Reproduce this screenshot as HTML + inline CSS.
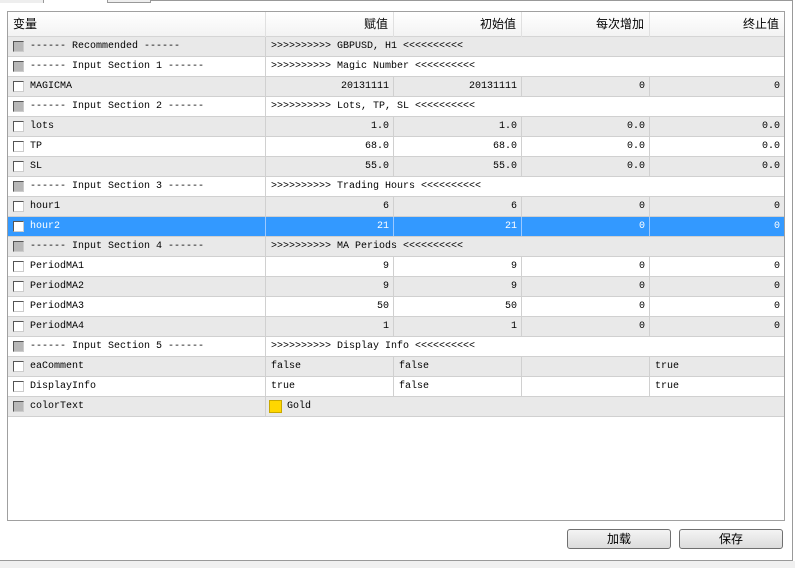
<!DOCTYPE html><html><head><meta charset="utf-8"><style>
*{margin:0;padding:0;box-sizing:border-box}
body{width:795px;height:568px;background:#fff;position:relative;overflow:hidden;font-family:"Liberation Mono","Noto Sans CJK SC",monospace;font-size:10px;color:#000}
.a{position:absolute}
.tbl{left:7px;top:11px;width:778px;height:510px;border:1px solid #a0a0a0;background:#fff}
.hd{position:absolute;left:0;top:0;width:776px;height:25px;background:linear-gradient(#fff,#f3f3f3);border-bottom:1px solid #d5d5d5;font-family:"Liberation Sans","Noto Sans CJK SC",sans-serif;font-size:12px}
.hd div{position:absolute;top:0;height:25px;line-height:25px;border-right:1px solid #e0e0e0;padding:0 5px}
.r{position:absolute;left:0;width:776px;height:20px;border-bottom:1px solid #d0d0d0}
.g{background:#e9e9e9}.w{background:#fff}.s{background:#3399ff;color:#fff}
.c{position:absolute;top:0;height:19px;line-height:19px;border-right:1px solid #d0d0d0;white-space:pre;overflow:hidden}
.s .c{border-right-color:#9cc9ff}
.rt{text-align:right;padding-right:4px}.lt{padding-left:5px}
.cb{position:absolute;left:5px;top:4px;width:11px;height:11px;border:1px solid #555;background:#fff;border-right-color:#ccc;border-bottom-color:#ccc}
.cb.x{background:#b8b8b8}
.btn{position:absolute;top:529px;width:104px;height:20px;border:1px solid #707070;border-radius:3px;background:linear-gradient(#f4f4f4,#dcdcdc);font-family:"Liberation Sans","Noto Sans CJK SC",sans-serif;font-size:12px;text-align:center;line-height:18px}
</style></head><body>
<div class="a" style="left:0;top:0;width:44px;height:3px;border-right:1px solid #999;background:#eee"></div>
<div class="a" style="left:107px;top:0;width:44px;height:3px;border:1px solid #999;border-top:0;background:#eee"></div>
<div class="a" style="left:151px;top:0;width:641px;height:1px;background:#999"></div>
<div class="a" style="left:792px;top:0;width:1px;height:561px;background:#999"></div>
<div class="a" style="left:0;top:560px;width:793px;height:1px;background:#999"></div>
<div class="a" style="left:0;top:561px;width:795px;height:7px;background:#f0f0f0"></div>
<div class="a tbl">
<div class="hd"><div style="left:0;width:258px">变量</div><div style="left:258px;width:128px;text-align:right">赋值</div><div style="left:386px;width:128px;text-align:right">初始值</div><div style="left:514px;width:128px;text-align:right">每次增加</div><div style="left:642px;width:134px;text-align:right;border:0">终止值</div></div>
<div id="rows"></div>
</div>
<div class="btn" style="left:567px">加载</div>
<div class="btn" style="left:679px">保存</div>
<script>
var R=[
['s','------ Recommended ------','>>>>>>>>>> GBPUSD, H1 <<<<<<<<<<'],
['s','------ Input Section 1 ------','>>>>>>>>>> Magic Number <<<<<<<<<<'],
['v','MAGICMA','20131111','20131111','0','0'],
['s','------ Input Section 2 ------','>>>>>>>>>> Lots, TP, SL <<<<<<<<<<'],
['v','lots','1.0','1.0','0.0','0.0'],
['v','TP','68.0','68.0','0.0','0.0'],
['v','SL','55.0','55.0','0.0','0.0'],
['s','------ Input Section 3 ------','>>>>>>>>>> Trading Hours <<<<<<<<<<'],
['v','hour1','6','6','0','0'],
['v','hour2','21','21','0','0'],
['s','------ Input Section 4 ------','>>>>>>>>>> MA Periods <<<<<<<<<<'],
['v','PeriodMA1','9','9','0','0'],
['v','PeriodMA2','9','9','0','0'],
['v','PeriodMA3','50','50','0','0'],
['v','PeriodMA4','1','1','0','0'],
['s','------ Input Section 5 ------','>>>>>>>>>> Display Info <<<<<<<<<<'],
['b','eaComment','false','false','','true'],
['b','DisplayInfo','true','false','','true'],
['k','colorText','Gold']];
var h='';R.forEach(function(r,i){var bg=i==9?'s':(i%2?'w':'g');var top=25+i*20;
var gray=(r[0]=='s'||r[0]=='k');
h+='<div class="r '+bg+'" style="top:'+top+'px"><div class="c" style="left:0;width:258px"><div class="cb'+(gray?' x':'')+'"></div><span style="position:absolute;left:22px">'+r[1]+'</span></div>';
if(r[0]=='s')h+='<div class="c lt" style="left:258px;width:518px;border:0">'+r[2].replace(/</g,'&lt;').replace(/>/g,'&gt;')+'</div>';
else if(r[0]=='k')h+='<div class="c" style="left:258px;width:518px;border:0"><span style="position:absolute;left:3px;top:3px;width:13px;height:13px;background:#ffd700;border:1px solid #c8a800"></span><span style="position:absolute;left:21px">Gold</span></div>';
else{var cl=r[0]=='v'?'rt':'lt';h+='<div class="c '+cl+'" style="left:258px;width:128px">'+r[2]+'</div><div class="c '+cl+'" style="left:386px;width:128px">'+r[3]+'</div><div class="c '+cl+'" style="left:514px;width:128px">'+r[4]+'</div><div class="c '+cl+'" style="left:642px;width:134px;border:0">'+r[5]+'</div>';}
h+='</div>';});
document.getElementById('rows').innerHTML=h;
</script>
</body></html>
